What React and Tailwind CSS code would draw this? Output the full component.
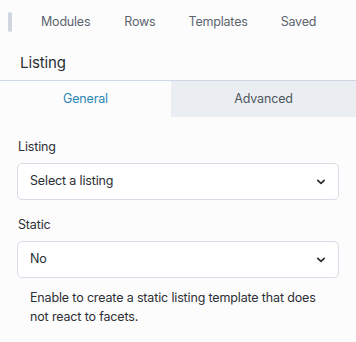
export default function App() {
  const Chevron = () => (
    <svg width="10" height="6" viewBox="0 0 10 6" fill="none" className="shrink-0 mr-[1px]">
      <path d="M1.8 1.3L5 4.4L8.2 1.3" stroke="#2a2e33" strokeWidth="1.7" strokeLinecap="round" strokeLinejoin="round" />
    </svg>
  );
  const Select = ({ value }) => (
    <div className="h-[37px] bg-white border border-[#d6dde6] rounded-[5px] flex items-center justify-between pl-[12px] pr-[11px] text-[12.5px] tracking-[-0.15px] text-[#2a2e33]">
      <span>{value}</span>
      <Chevron />
    </div>
  );
  return (
    <div className="w-[356px] h-[342px] bg-[#fcfcfc] overflow-hidden" style={{ fontFamily: "Inter, 'Noto Sans', sans-serif" }}>
      <div className="h-[45px] flex items-center relative">
        <div className="absolute left-[8px] top-[12px] w-[4px] h-[20px] rounded-full bg-[#cfd6de]" />
        <div className="flex items-center text-[12.5px] tracking-[-0.2px] text-[#5c6470] pl-[41px]">
          <span>Modules</span>
          <span className="ml-[34px]">Rows</span>
          <span className="ml-[33px]">Templates</span>
          <span className="ml-[33px]">Saved</span>
        </div>
      </div>
      <div className="h-[35px] flex items-center pl-[20px] pt-[2px] text-[15px] tracking-[-0.1px] text-[#2c3036]">Listing</div>
      <div className="border-t border-[#cdd8e4] flex h-[37px] text-[12.5px] tracking-[-0.15px]">
        <div className="w-[171px] flex items-center justify-center text-[#2a86b5] bg-[#fcfcfc]">General</div>
        <div className="flex-1 flex items-center justify-center text-[#4f565e] bg-[#eaeef2]">Advanced</div>
      </div>
      <div className="px-[17px] pt-[20px] text-[12.5px] tracking-[-0.15px]">
        <div className="text-[#2c3036] pl-[1px] h-[20px] leading-[20px]">Listing</div>
        <div className="mt-[6px]">
          <Select value="Select a listing" />
        </div>
        <div className="text-[#2c3036] pl-[1px] h-[20px] leading-[20px] mt-[15px]">Static</div>
        <div className="mt-[6px]">
          <Select value="No" />
        </div>
        <div className="pl-[13px] pr-[16px] mt-[10px] leading-[19px] text-[#2c3036]">
          Enable to create a static listing template that does not react to facets.
        </div>
      </div>
    </div>
  );
}
